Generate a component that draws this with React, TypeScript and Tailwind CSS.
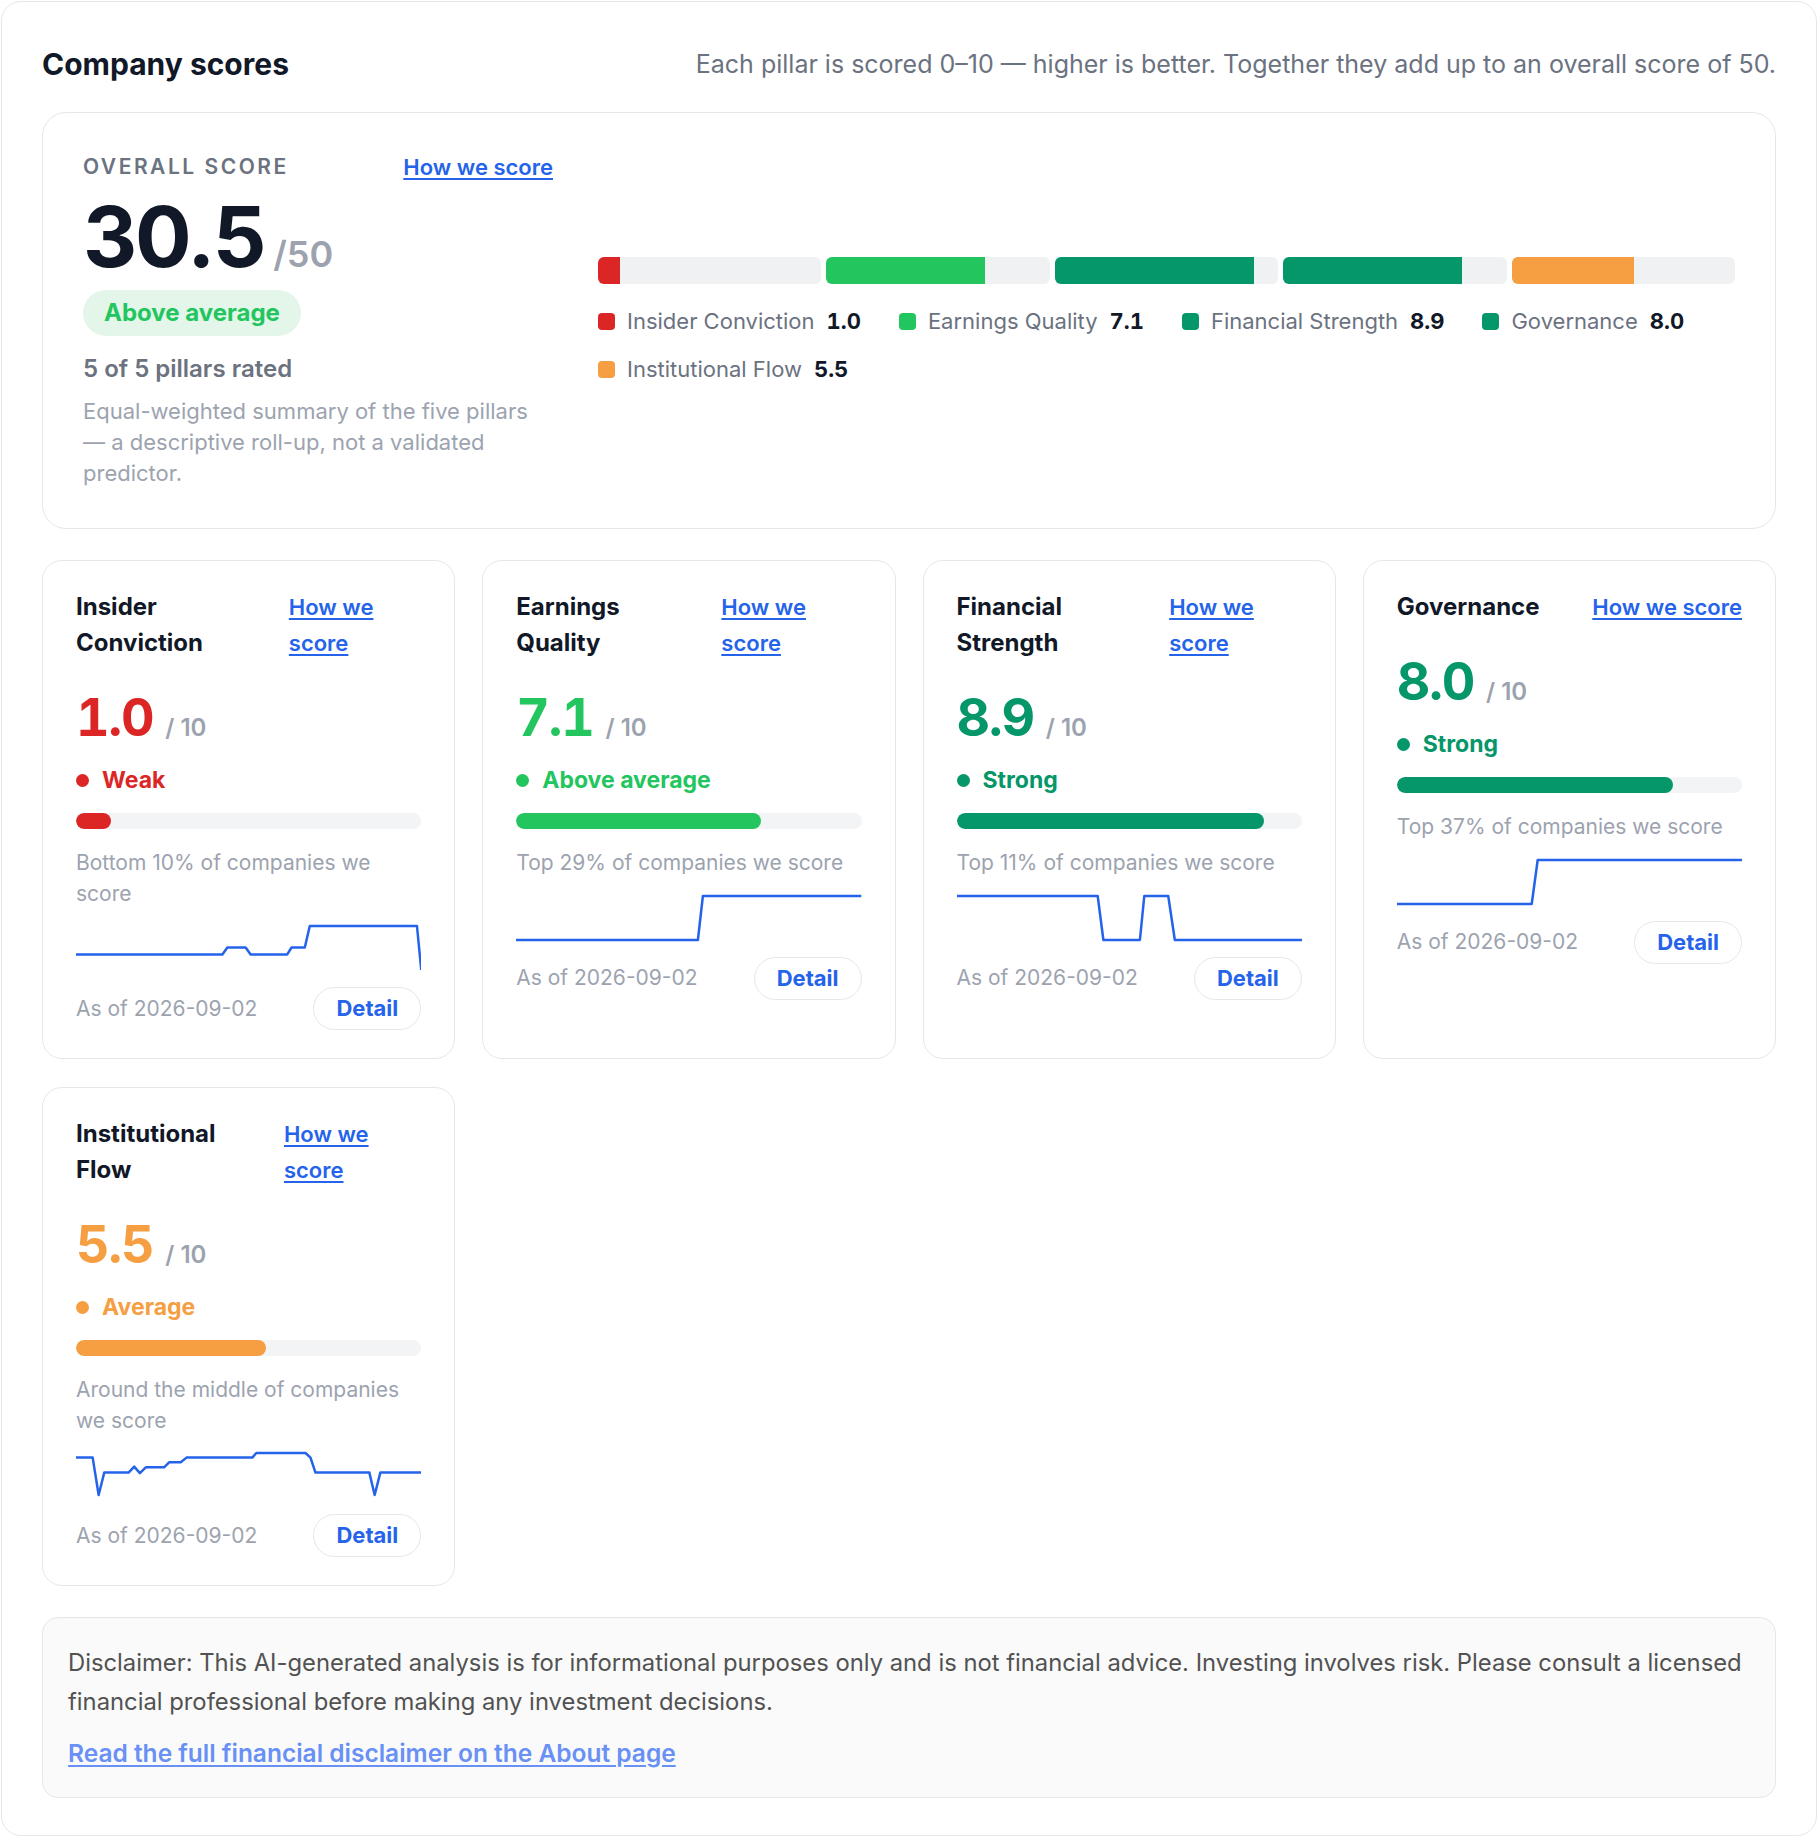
import React from "react";

type Pillar = {
  name: string;
  score: number;
  label: string;
  text: string;
  bg: string;
  percentile: string;
  spark: [number, number][];
};

const pillars: Pillar[] = [
  {
    name: "Insider Conviction",
    score: 1.0,
    label: "Weak",
    text: "text-[#dc2626]",
    bg: "bg-[#dc2626]",
    percentile: "Bottom 10% of companies we score",
    spark: [
      [0, 28.4], [146.7, 28.4], [151.7, 21.5], [170, 21.5], [175, 28.4], [211.7, 28.4],
      [216, 21.5], [229.3, 21.5], [234.3, 0], [341.7, 0], [346, 44],
    ],
  },
  {
    name: "Earnings Quality",
    score: 7.1,
    label: "Above average",
    text: "text-[#22c55e]",
    bg: "bg-[#22c55e]",
    percentile: "Top 29% of companies we score",
    spark: [[0, 44], [182.3, 44], [187.3, 0], [346, 0]],
  },
  {
    name: "Financial Strength",
    score: 8.9,
    label: "Strong",
    text: "text-[#059669]",
    bg: "bg-[#059669]",
    percentile: "Top 11% of companies we score",
    spark: [
      [0, 0], [141, 0], [146.7, 44], [183.3, 44], [187.7, 0], [211.7, 0], [218.3, 44], [346, 44],
    ],
  },
  {
    name: "Governance",
    score: 8.0,
    label: "Strong",
    text: "text-[#059669]",
    bg: "bg-[#059669]",
    percentile: "Top 37% of companies we score",
    spark: [[0, 44], [135, 44], [141, 0], [346, 0]],
  },
  {
    name: "Institutional Flow",
    score: 5.5,
    label: "Average",
    text: "text-[#f59e42]",
    bg: "bg-[#f59e42]",
    percentile: "Around the middle of companies we score",
    spark: [
      [0, 4.6], [16.7, 4.6], [22.7, 42], [28.3, 19.6], [52.7, 19.6], [58.3, 13.6], [64, 20.1],
      [70, 14.3], [88.3, 14.3], [93.3, 9.3], [105, 9.3], [110.7, 4.6], [176.7, 4.6], [180.7, 0],
      [230, 0], [235, 4.6], [240, 19.6], [294, 19.6], [299.3, 42], [305, 19.6], [346, 19.6],
    ],
  },
];

function Sparkline({ points }: { points: [number, number][] }) {
  const d = points.map(([x, y]) => `${x},${y + 2}`).join(" ");
  return (
    <svg className="mt-[15px] block h-12 w-full" viewBox="0 0 346 48" preserveAspectRatio="none">
      <polyline
        points={d}
        fill="none"
        stroke="#2563eb"
        strokeWidth={2.5}
        strokeLinejoin="round"
        vectorEffect="non-scaling-stroke"
      />
    </svg>
  );
}

function PillarCard({ p }: { p: Pillar }) {
  return (
    <div className="rounded-[20px] border border-[#e5e7eb] bg-white px-[33px] pt-[28px] pb-[28px]">
      <div className="flex items-start justify-between gap-6">
        <h3 className="text-[24px] font-bold leading-[36px] text-[#111827]">{p.name}</h3>
        <a href="#" className="text-[22px] font-semibold leading-[36px] text-[#2563eb] underline underline-offset-[3px]">
          How we score
        </a>
      </div>
      <div className="mt-[31px] flex items-baseline gap-3">
        <span className={`text-[52px] font-bold leading-none tracking-tight tabular-nums ${p.text}`}>
          {p.score.toFixed(1)}
        </span>
        <span className="text-[24px] font-semibold leading-none text-[#9ca3af]">/ 10</span>
      </div>
      <div className="mt-5 flex items-center gap-[13px]">
        <span className={`h-[13px] w-[13px] rounded-full ${p.bg}`} />
        <span className={`text-[23px] font-bold leading-[33px] ${p.text}`}>{p.label}</span>
      </div>
      <div className="mt-4 h-4 overflow-hidden rounded-full bg-[#f3f4f6]">
        <div className={`h-full rounded-full ${p.bg}`} style={{ width: `${p.score * 10}%` }} />
      </div>
      <p className="mt-[19px] text-[21px] leading-[30.5px] text-[#9ca3af]">{p.percentile}</p>
      <Sparkline points={p.spark} />
      <div className="mt-[15px] flex items-center justify-between">
        <span className="text-[21px] text-[#9ca3af]">As of 2026-09-02</span>
        <button className="h-[43px] rounded-full border border-[#e5e7eb] px-[22px] text-[22px] font-bold text-[#2563eb]">
          Detail
        </button>
      </div>
    </div>
  );
}

export default function App() {
  return (
    <div className="min-h-screen bg-white p-px font-['Inter','Noto_Sans',sans-serif]">
      <div className="rounded-[20px] border border-[#e5e7eb] px-10 pt-[42px] pb-[37px]">
        <header className="flex items-center justify-between">
          <h2 className="text-[30px] font-bold leading-[40px] text-[#111827]">Company scores</h2>
          <p className="text-[25px] leading-[34px] text-[#6b7280]">
            Each pillar is scored 0–10 — higher is better. Together they add up to an overall score of 50.
          </p>
        </header>

        <section className="mt-7 flex items-center gap-[45px] rounded-[24px] border border-[#e5e7eb] px-10 py-[39px]">
          <div className="w-[470px] shrink-0">
            <div className="flex items-center justify-between">
              <span className="text-[21px] font-semibold uppercase leading-[30px] tracking-[0.12em] text-[#6b7280]">
                Overall score
              </span>
              <a href="#" className="text-[22px] font-semibold leading-[30px] text-[#2563eb] underline underline-offset-[3px]">
                How we score
              </a>
            </div>
            <div className="mt-[13px] flex items-baseline gap-[9px]">
              <span className="text-[84px] font-bold leading-none tracking-tight text-[#111827]">30.5</span>
              <span className="text-[36px] font-semibold leading-none text-[#9ca3af]">/50</span>
            </div>
            <div className="mt-[11px] flex">
              <span className="flex h-[46px] items-center rounded-full bg-[#e3f6e9] px-[21px] text-[24px] font-bold text-[#22c55e]">
                Above average
              </span>
            </div>
            <p className="mt-4 text-[24px] font-semibold leading-[33px] text-[#6b7280]">5 of 5 pillars rated</p>
            <p className="mt-[11px] text-[22px] leading-[31px] text-[#9ca3af]">
              Equal-weighted summary of the five pillars — a descriptive roll-up, not a validated predictor.
            </p>
          </div>

          <div className="flex-1">
            <div className="flex gap-[5px]">
              {pillars.map((p) => (
                <div key={p.name} className="h-[27px] flex-1 overflow-hidden rounded-[6px] bg-[#f0f1f3]">
                  <div className={`h-full ${p.bg}`} style={{ width: `${p.score * 10}%` }} />
                </div>
              ))}
            </div>
            <div className="mt-[22px] flex flex-wrap gap-x-[38px] gap-y-[18px]">
              {pillars.map((p) => (
                <div key={p.name} className="flex items-center">
                  <span className={`h-[17px] w-[17px] rounded-[4px] ${p.bg}`} />
                  <span className="ml-3 text-[22px] leading-[30px] text-[#6b7280]">{p.name}</span>
                  <span className="ml-3 text-[22px] font-bold leading-[30px] tabular-nums text-[#111827]">
                    {p.score.toFixed(1)}
                  </span>
                </div>
              ))}
            </div>
          </div>
        </section>

        <div className="mt-[31px] grid grid-cols-4 gap-x-[27px] gap-y-[28px]">
          {pillars.map((p) => (
            <PillarCard key={p.name} p={p} />
          ))}
        </div>

        <div className="mt-[31px] rounded-[16px] border border-[#e5e7eb] bg-[#fafafa] px-[25px] pt-[26px] pb-[27px]">
          <p className="text-[23.8px] leading-[38.5px] text-[#525252]">
            Disclaimer: This AI-generated analysis is for informational purposes only and is not financial advice.
            Investing involves risk. Please consult a licensed financial professional before making any investment
            decisions.
          </p>
          <a href="#" className="mt-4 block text-[24.5px] font-semibold leading-[33px] text-[#6890f5] underline underline-offset-[3px]">
            Read the full financial disclaimer on the About page
          </a>
        </div>
      </div>
    </div>
  );
}
